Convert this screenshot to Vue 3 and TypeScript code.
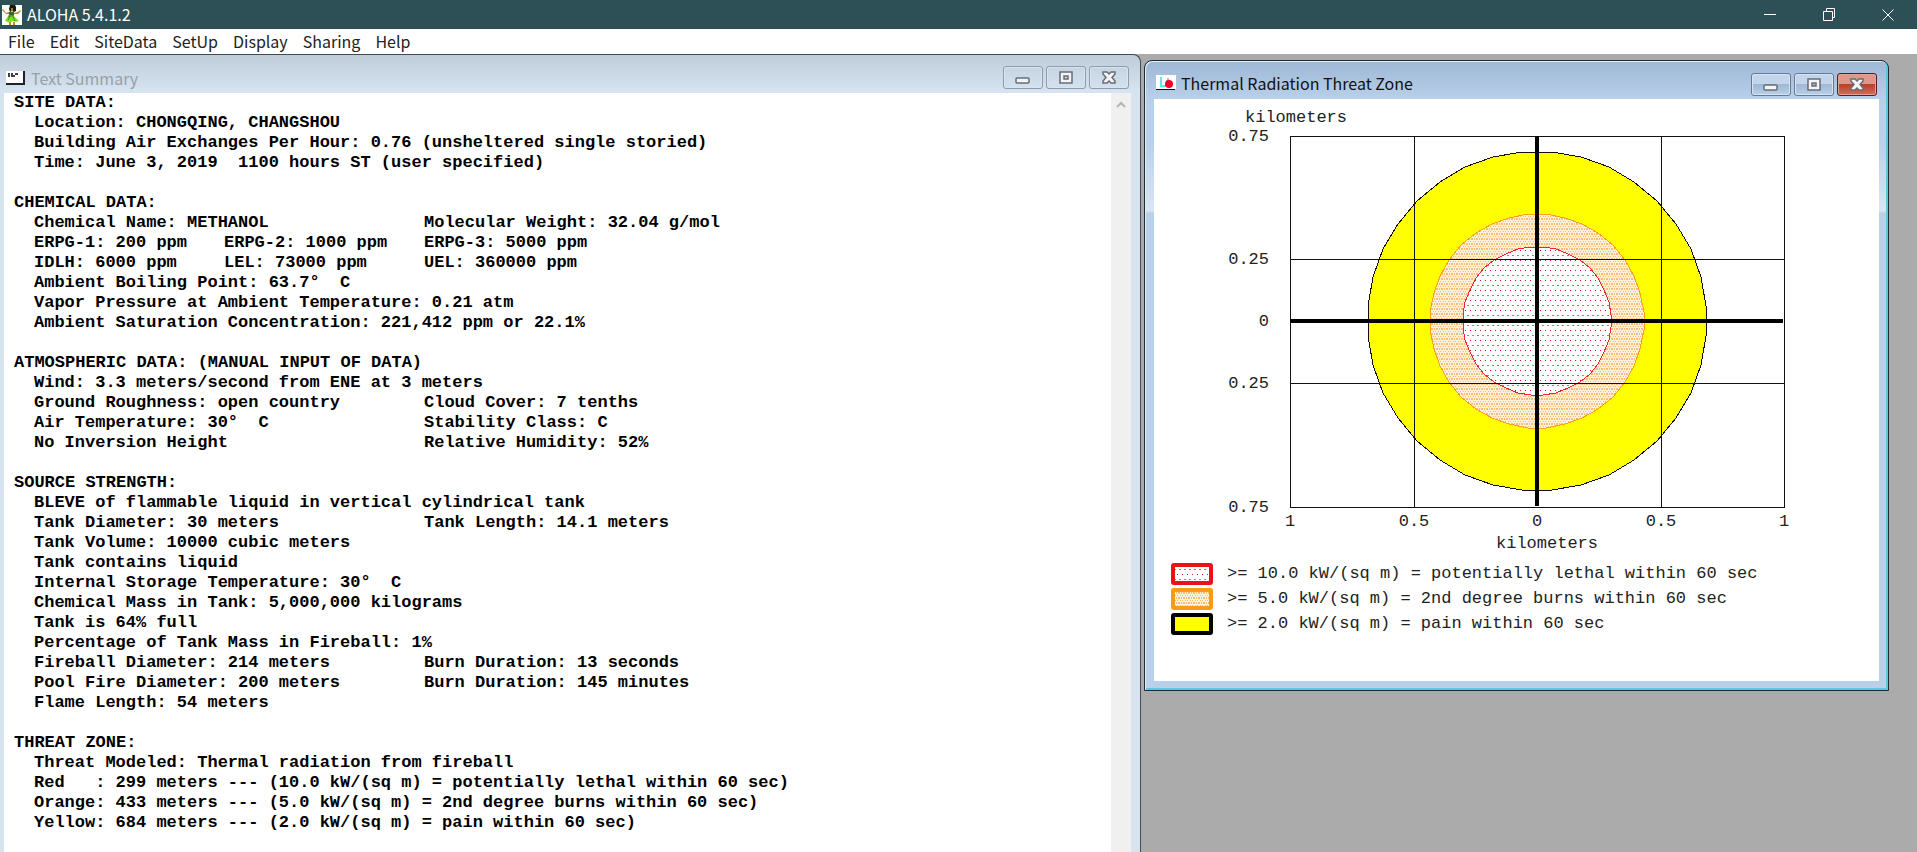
<script setup lang="ts">
type Cell = string
const lines: Cell[][] = [
  ['SITE DATA:'],
  ['', 'Location: CHONGQING, CHANGSHOU'],
  ['', 'Building Air Exchanges Per Hour: 0.76 (unsheltered single storied)'],
  ['', 'Time: June 3, 2019  1100 hours ST (user specified)'],
  [],
  ['CHEMICAL DATA:'],
  ['', 'Chemical Name: METHANOL', '', 'Molecular Weight: 32.04 g/mol'],
  ['', 'ERPG-1: 200 ppm', 'ERPG-2: 1000 ppm', 'ERPG-3: 5000 ppm'],
  ['', 'IDLH: 6000 ppm', 'LEL: 73000 ppm', 'UEL: 360000 ppm'],
  ['', 'Ambient Boiling Point: 63.7°  C'],
  ['', 'Vapor Pressure at Ambient Temperature: 0.21 atm'],
  ['', 'Ambient Saturation Concentration: 221,412 ppm or 22.1%'],
  [],
  ['ATMOSPHERIC DATA: (MANUAL INPUT OF DATA)'],
  ['', 'Wind: 3.3 meters/second from ENE at 3 meters'],
  ['', 'Ground Roughness: open country', '', 'Cloud Cover: 7 tenths'],
  ['', 'Air Temperature: 30°  C', '', 'Stability Class: C'],
  ['', 'No Inversion Height', '', 'Relative Humidity: 52%'],
  [],
  ['SOURCE STRENGTH:'],
  ['', 'BLEVE of flammable liquid in vertical cylindrical tank'],
  ['', 'Tank Diameter: 30 meters', '', 'Tank Length: 14.1 meters'],
  ['', 'Tank Volume: 10000 cubic meters'],
  ['', 'Tank contains liquid'],
  ['', 'Internal Storage Temperature: 30°  C'],
  ['', 'Chemical Mass in Tank: 5,000,000 kilograms'],
  ['', 'Tank is 64% full'],
  ['', 'Percentage of Tank Mass in Fireball: 1%'],
  ['', 'Fireball Diameter: 214 meters', '', 'Burn Duration: 13 seconds'],
  ['', 'Pool Fire Diameter: 200 meters', '', 'Burn Duration: 145 minutes'],
  ['', 'Flame Length: 54 meters'],
  [],
  ['THREAT ZONE:'],
  ['', 'Threat Modeled: Thermal radiation from fireball'],
  ['', 'Red   : 299 meters --- (10.0 kW/(sq m) = potentially lethal within 60 sec)'],
  ['', 'Orange: 433 meters --- (5.0 kW/(sq m) = 2nd degree burns within 60 sec)'],
  ['', 'Yellow: 684 meters --- (2.0 kW/(sq m) = pain within 60 sec)'],
]
const menus = ['File', 'Edit', 'SiteData', 'SetUp', 'Display', 'Sharing', 'Help']

// Plot geometry: pixels per kilometer and origin inside the drawing
const scale = 247
const cx = 383
const cy = 222
const ring = (km: number, sides: number): string => {
  const pts: string[] = []
  for (let i = 0; i < sides; i++) {
    const a = ((i + 0.5) / sides) * Math.PI * 2
    pts.push(`${Math.round(cx + Math.cos(a) * km * scale)},${Math.round(cy + Math.sin(a) * km * scale)}`)
  }
  return pts.join(' ')
}
const xTicks = [
  { x: 136, label: '1' },
  { x: 260, label: '0.5' },
  { x: 383, label: '0' },
  { x: 507, label: '0.5' },
  { x: 630, label: '1' },
]
const yTicks = [
  { y: 37, label: '0.75' },
  { y: 160, label: '0.25' },
  { y: 222, label: '0' },
  { y: 284, label: '0.25' },
  { y: 408, label: '0.75' },
]
const legend = [
  { kind: 'red', text: '>= 10.0 kW/(sq m) = potentially lethal within 60 sec' },
  { kind: 'orange', text: '>= 5.0 kW/(sq m) = 2nd degree burns within 60 sec' },
  { kind: 'yellow', text: '>= 2.0 kW/(sq m) = pain within 60 sec' },
]
</script>

<template>
  <div class="app">
    <header class="titlebar">
      <svg class="hula" width="20" height="20" viewBox="0 0 20 20" aria-hidden="true">
        <rect width="20" height="20" fill="#fff" />
        <path d="M8 0h5l1 2v4l-2 1-2-1-2 1-1-3z" fill="#1c1a08" />
        <path d="M9 3h2v3H9z" fill="#a8742c" />
        <path d="M1 4l3 4 3-1 5 1 4-1 2-2 1 1-3 3-4 0v2H7V9L4 9 0 5z" fill="#b98a2e" />
        <path d="M7 7h5v3H7z" fill="#2f6b22" />
        <path d="M6 11h6l5 5-3 1-3-1-3 2-5-2z" fill="#7fe01c" />
        <path d="M8 11l-2 4M11 12l2 4M6 11h6" stroke="#2f8a1c" fill="none" />
        <path d="M7 17h2v3H7zM11 17h2v3h-2z" fill="#c0902a" />
      </svg>
      <h1>ALOHA 5.4.1.2</h1>
      <div class="sysbuttons">
        <button type="button" aria-label="Minimize"><svg width="14" height="14"><path d="M1 6.5h12" /></svg></button>
        <button type="button" aria-label="Restore"><svg width="14" height="14"><path d="M1.5 3.5h9v9h-9zM4.5 3.5v-3h8v9h-2" /></svg></button>
        <button type="button" aria-label="Close"><svg width="14" height="14"><path d="M1.5 1.5l11 11M12.5 1.5l-11 11" /></svg></button>
      </div>
    </header>
    <nav class="menubar">
      <button v-for="m in menus" :key="m" type="button">{{ m }}</button>
    </nav>

    <main class="desktop">
      <section class="win summary">
        <div class="caption">
          <svg class="wicon" width="20" height="15" viewBox="0 0 20 15" aria-hidden="true">
            <rect width="18" height="13" fill="#fff" />
            <path d="M0 13h18V0" stroke="#222" stroke-width="2" fill="none" />
            <path d="M3 2v4M6 2v4M8 6V4M9 3h3" stroke="#000" stroke-width="1.5" />
          </svg>
          <h2>Text Summary</h2>
          <div class="wbuttons">
            <button type="button" aria-label="Minimize summary"><svg width="16" height="14"><rect x="1" y="7" width="13" height="5" rx="1" /></svg></button>
            <button type="button" aria-label="Maximize summary"><svg width="16" height="14"><path fill-rule="evenodd" d="M2 1h12v11H2zM6 5h4v3H6z" /></svg></button>
            <button type="button" aria-label="Close summary"><svg width="16" height="14"><path d="M2 1h4l2 2 2-2h4v2l-3 3.5 3 3.5v2h-4l-2-2-2 2H2v-2l3-3.5L2 3z" /></svg></button>
          </div>
        </div>
        <div class="client">
          <div class="report">
            <p v-for="(row, i) in lines" :key="i" :class="{ split: row.length > 2 }">
              <template v-if="row.length > 2">
                <span>{{ row[1] }}</span><span>{{ row[2] }}</span><span>{{ row[3] }}</span>
              </template>
              <span v-else-if="row.length === 2" class="indent">{{ row[1] }}</span>
              <template v-else>{{ row[0] }}</template>
            </p>
          </div>
          <div class="scroll">
            <button type="button" aria-label="Scroll up"><svg width="12" height="10"><path d="M2 8l4-4 4 4" /></svg></button>
          </div>
        </div>
      </section>

      <section class="win threat">
        <div class="caption">
          <svg class="wicon" width="20" height="16" viewBox="0 0 20 16" aria-hidden="true">
            <rect width="20" height="14" fill="#fff" />
            <path d="M5 2v9h6V5" stroke="#5fe6f2" stroke-width="2" fill="none" />
            <path d="M12 3v3" stroke="#c4c" stroke-width="1" />
            <circle cx="13" cy="9" r="4" fill="#f8002c" />
            <rect y="14" width="19" height="1" fill="#111" />
          </svg>
          <h2>Thermal Radiation Threat Zone</h2>
          <div class="wbuttons">
            <button type="button" aria-label="Minimize threat zone"><svg width="16" height="14"><rect x="1" y="7" width="13" height="5" rx="1" /></svg></button>
            <button type="button" aria-label="Maximize threat zone"><svg width="16" height="14"><path fill-rule="evenodd" d="M2 1h12v11H2zM6 5h4v3H6z" /></svg></button>
            <button type="button" class="close" aria-label="Close threat zone"><svg width="16" height="14"><path d="M2 1h4l2 2 2-2h4v2l-3 3.5 3 3.5v2h-4l-2-2-2 2H2v-2l3-3.5L2 3z" /></svg></button>
          </div>
        </div>
        <div class="client plotarea">
          <svg class="plot" width="660" height="460" viewBox="0 0 660 460" role="img" aria-label="Threat zone plot">
            <defs>
              <pattern id="redDots" width="5" height="10" patternUnits="userSpaceOnUse">
                <rect width="5" height="10" fill="#fff" />
                <rect x="1" y="1" width="1" height="1" fill="#d8101c" />
                <rect x="3" y="6" width="2" height="1" fill="#f06068" />
              </pattern>
              <pattern id="orangeDots" width="5" height="5" patternUnits="userSpaceOnUse">
                <rect width="5" height="5" fill="#fff0da" />
                <path d="M0 0h1v1H0zM2 0h2v1H2zM1 2h1v1H1zM4 2h1v1H4zM0 4h1v1H0zM2 4h2v1H2z" fill="#f8bc74" />
              </pattern>
            </defs>
            <g class="rings">
              <polygon :points="ring(0.687, 36)" fill="#ff0" stroke="#111" />
              <polygon :points="ring(0.433, 36)" fill="url(#orangeDots)" stroke="#ff9d1e" />
              <polygon :points="ring(0.301, 36)" fill="url(#redDots)" stroke="#ee2430" />
            </g>
            <g class="gridlines">
              <rect x="136" y="37" width="494" height="371" />
              <path d="M260 37v371M507 37v371M136 160h494M136 284h494" />
              <path class="axes" d="M383 37v370M136 222h493" />
            </g>
            <g class="labels">
              <text x="91" y="23">kilometers</text>
              <text v-for="t in yTicks" :key="t.y" x="115" :y="t.y + 5" text-anchor="end">{{ t.label }}</text>
              <text v-for="t in xTicks" :key="t.x" :x="t.x" y="427" text-anchor="middle">{{ t.label }}</text>
              <text x="393" y="449" text-anchor="middle">kilometers</text>
            </g>
          </svg>
          <ul class="legend">
            <li v-for="l in legend" :key="l.kind">
              <svg width="42" height="22" aria-hidden="true">
                <rect x="2" y="2" width="38" height="18" rx="1" :class="l.kind" />
              </svg>
              <span>{{ l.text }}</span>
            </li>
          </ul>
        </div>
      </section>
    </main>
  </div>
</template>

<style>
html, body { margin: 0; overflow: hidden; }
</style>

<style scoped>
* { box-sizing: border-box; }
h1, h2, p, ul { margin: 0; padding: 0; }
h1, h2 { font-weight: 400; }
button { margin: 0; padding: 0; border: 0; background: none; font: inherit; color: inherit; }
svg { display: block; flex: none; }
.app {
  display: flex; flex-direction: column; height: 100vh; overflow: hidden;
  background: #ababab; color: #222;
  font-family: "Noto Sans CJK SC", "Noto Sans", sans-serif; font-size: 16px;
}
.titlebar { display: flex; align-items: center; height: 29px; flex: none; padding-left: 2px; background: #2c5055; color: #fff; }
.titlebar h1 { margin-left: 5px; font-size: 16px; line-height: 29px; }
.sysbuttons { display: flex; margin-left: auto; }
.sysbuttons button { display: grid; place-items: center; width: 59px; height: 29px; }
.sysbuttons path { fill: none; stroke: #fff; }
.menubar { display: flex; gap: 15px; height: 25px; flex: none; padding-left: 8px; background: #fff; }
.menubar button { line-height: 24px; height: 24px; }
.desktop {
  flex: 1; min-height: 0; display: grid; grid-template-columns: minmax(0, 1141fr) minmax(0, 745fr);
  gap: 3px; padding-right: 28px;
}
.win { display: flex; flex-direction: column; min-width: 0; }
.summary {
  padding: 0 9px 0 4px; border-top: 1px solid #444b52; border-right: 1px solid #444b52;
  border-top-right-radius: 8px;
  background: linear-gradient(#bfcddb, #d7e4f1 38px, #d7e4f0 38px);
}
.caption { display: flex; align-items: center; height: 38px; flex: none; gap: 5px; }
.caption h2 { font-size: 16px; line-height: 24px; }
.summary .caption { padding: 8px 2px 0 2px; }
.summary h2 { color: #98a0a8; }
.wbuttons { display: flex; gap: 3px; margin-left: auto; align-self: flex-start; }
.wbuttons button {
  display: grid; place-items: center; width: 40px; height: 23px;
  border: 1px solid #8e9aad; border-radius: 3px; box-shadow: inset 0 0 0 1px #d9e4ef;
}
.summary .wbuttons { margin-top: 3px; }
.wbuttons svg { fill: #f4f4f4; stroke: #666c78; stroke-width: 1.5; }
.client { display: flex; flex: 1; min-height: 0; background: #fff; }
.report {
  flex: 1; min-width: 0; padding: 0 0 0 10px; overflow: hidden; white-space: pre;
  font: bold 17px/20px "Liberation Mono", monospace; color: #000;
}
.report p { height: 20px; }
.indent { padding-left: 20px; }
.split { display: grid; grid-template-columns: 190px 200px 1fr; padding-left: 20px; }
.scroll { width: 20px; flex: none; background: #f0f0f0; }
.scroll button { display: grid; place-items: center; width: 20px; height: 22px; }
.scroll path { fill: none; stroke: #b4b4b4; stroke-width: 2; }
.threat {
  align-self: start; margin-top: 6px; padding: 0 9px 9px;
  border: 1px solid #1d2b33; border-radius: 8px 8px 0 0;
  box-shadow: inset 1px 1px #e4eef8, inset -2px -2px #5cc8de;
  background: linear-gradient(#9db7d5, #b9d0ea 38px, #b9d0ea 80px, #d9e6f4 150px, #b9d0e9 152px);
}
.threat .caption { padding: 6px 2px 0 2px; }
.threat h2 { color: #111; }
.threat .wbuttons { margin-top: 6px; }
.threat .wbuttons button {
  border-color: #64799a; background: linear-gradient(#c3d5ea 48%, #9fb8d4 50%, #b8d0e8);
}
.threat .wbuttons .close {
  border-color: #5c1a22; box-shadow: inset 0 0 0 1px #e0a398;
  background: linear-gradient(#dc988a 48%, #b8402c 50%, #d0705a);
}
.plotarea { flex-direction: column; padding-bottom: 45px; }
.plot { max-width: 100%; }
.rings, .gridlines { shape-rendering: crispEdges; }
.gridlines { fill: none; stroke: #111; }
.axes { stroke: #000; stroke-width: 4; }
.labels, .legend { font: 17px/25px "Liberation Mono", monospace; fill: #222; color: #222; }
.legend { list-style: none; padding: 2px 0 0 17px; white-space: pre; }
.legend li { display: flex; gap: 14px; height: 25px; align-items: center; }
.legend rect { stroke-width: 4; }
.red { fill: url(#redDots); stroke: #ec1018; }
.orange { fill: url(#orangeDots); stroke: #f99a18; }
.yellow { fill: #ff0; stroke: #000; }
</style>
